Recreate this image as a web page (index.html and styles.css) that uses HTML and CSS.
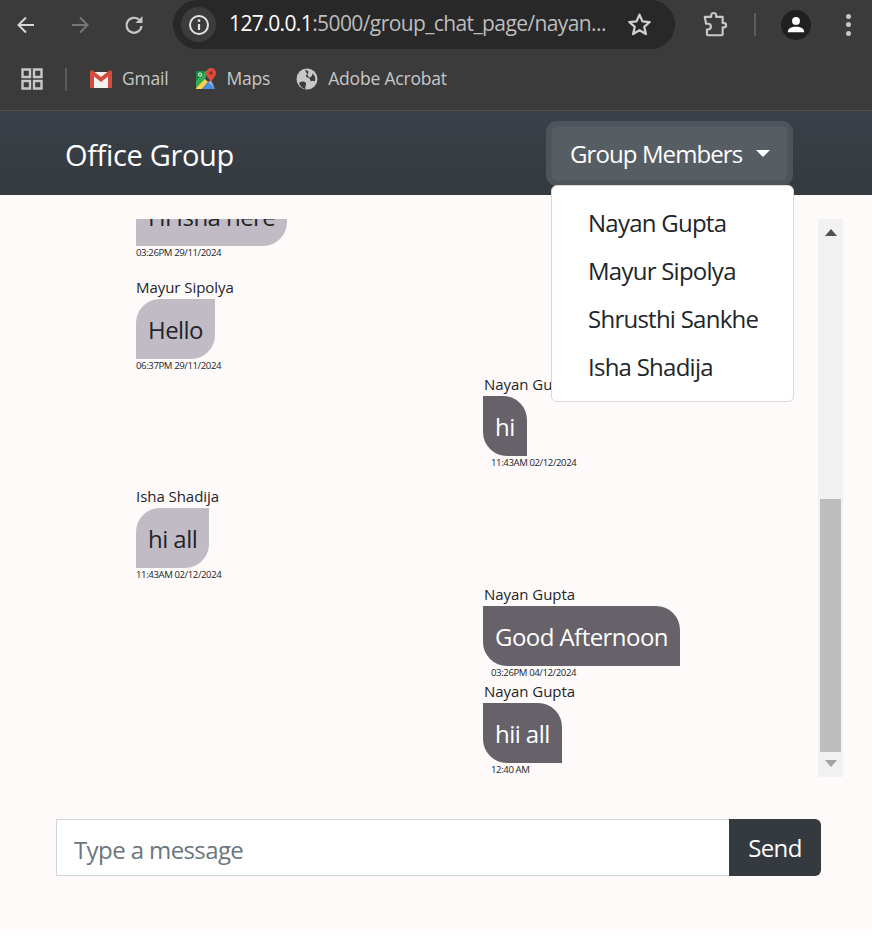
FILE: index.html
```html
<!DOCTYPE html>
<html lang="en">
<head>
    <meta charset="UTF-8">
    <meta name="viewport" content="width=device-width, initial-scale=1.0">
    <title>Office Group</title>
    <link rel="stylesheet" href="styles.css">
</head>
<body>
    <header class="browser">
        <div class="toolbar">
            <svg class="tool tool-back" viewBox="0 0 24 24"><path d="M20 12H5M12 4.500 4.500 12l7.500 7.500" fill="none" stroke="currentColor" stroke-width="2"/></svg>
            <svg class="tool tool-forward" viewBox="0 0 24 24"><path d="M4 12h15M12 4.500l7.500 7.500-7.500 7.500" fill="none" stroke="currentColor" stroke-width="2"/></svg>
            <svg class="tool tool-reload" viewBox="0 0 24 24"><path d="M19.500 13a7.500 7.500 0 1 1-2.300-6.200" fill="none" stroke="currentColor" stroke-width="2.200"/><path d="M20.500 3v7h-7z" fill="currentColor"/></svg>
            <div class="omnibox">
                <span class="site-info">
                    <svg viewBox="0 0 24 24"><circle cx="12" cy="12" r="9" fill="none" stroke="currentColor" stroke-width="2"/><path d="M12 11v6" stroke="currentColor" stroke-width="2.200"/><circle cx="12" cy="7.600" r="1.400" fill="currentColor"/></svg>
                </span>
                <span class="url"><span class="url-host">127.0.0.1</span>:5000/group_chat_page/nayan...</span>
                <svg class="star" viewBox="0 0 24 24"><path d="M12 3.200l2.600 6 6.500.6-4.900 4.300 1.500 6.400L12 17.100l-5.700 3.400 1.500-6.400-4.900-4.300 6.500-.6z" fill="none" stroke="currentColor" stroke-width="2" stroke-linejoin="round"/></svg>
            </div>
            <svg class="puzzle" viewBox="0 0 26 26"><path d="M9.500 5.500V4.200a2.300 2.300 0 0 1 4.600 0v1.300h6v5.700h1.200a2 2 0 0 1 0 4h-1.200v6.300a1 1 0 0 1-1 1H6.500a1 1 0 0 1-1-1v-4.300h1a2.700 2.700 0 0 0 0-5.400h-1.800L3.500 5.500z" fill="none" stroke="currentColor" stroke-width="2" stroke-linejoin="round"/></svg>
            <span class="tool-sep"></span>
            <span class="avatar">
                <svg viewBox="0 0 24 24"><circle cx="12" cy="7.500" r="4.300" fill="#fff"/><path d="M3 20c0-4.200 4-6 9-6s9 1.800 9 6z" fill="#fff"/></svg>
            </span>
            <span class="kebab"><i></i><i></i><i></i></span>
        </div>
        <div class="bookmarks">
            <svg class="apps" viewBox="0 0 22 22"><path d="M1.500 1.500h7.500V9H1.500zM13 1.500h7.500V9H13zM1.500 13H9v7.500H1.500zM13 13h7.500v7.500H13z" fill="none" stroke="currentColor" stroke-width="2.400"/></svg>
            <span class="bm-sep"></span>
            <a class="bookmark bm-gmail">
                <svg viewBox="0 0 22 18"><path d="M1 2h20v15a1 1 0 0 1-1 1H2a1 1 0 0 1-1-1z" fill="#f2f2f2"/><path d="M0 2a1.800 1.800 0 0 1 3-1.200L11 7l8-6.200A1.800 1.800 0 0 1 22 2v15a1 1 0 0 1-1 1h-3V6.500L11 12 4 6.500V18H1a1 1 0 0 1-1-1z" fill="#d54c3f"/></svg>
                Gmail
            </a>
            <a class="bookmark bm-maps">
                <svg viewBox="0 0 22 22"><path d="M1 3h12l-3 9-9 8z" fill="#34a853"/><path d="M1 3h10L1 13z" fill="#1a8a45"/><path d="M1 20 10 11l3 3-6 7H1z" fill="#fbd14b"/><path d="M7 21l6-7 7 7z" fill="#4a90e2"/><path d="M13 14l3-2 4 9z" fill="#8ab4f8"/><path d="M16 0a5 5 0 0 1 5 5c0 3.500-3.500 5.500-5 9.500-1.500-4-5-6-5-9.500a5 5 0 0 1 5-5z" fill="#dd4b3e"/><circle cx="16" cy="5" r="1.800" fill="#8c2a22"/><circle cx="5" cy="6.500" r="1.600" fill="none" stroke="#fff"/></svg>
                Maps
            </a>
            <a class="bookmark bm-acrobat">
                <svg viewBox="0 0 22 22"><circle cx="11" cy="11" r="10.500" fill="#c7c7c7"/><path d="M3 15c2-2 5-2 6.500-.5 1 1 .6 2.500 0 3.500-.4.900-.2 2 .3 3-3-.3-5.500-2.300-6.800-6z" fill="#3b3b3b"/><path d="M9 2c2 0 3.800 1 3.500 2.500-.2 1.500-2 1.500-2.500 3-.4 1.500 1.500 2.500 3.500 2 2-.4 3-2 3-4.200L18.600 8c1 2 .8 4-.1 5.500-1-1-2.300-.7-3.500 0" fill="#3b3b3b"/></svg>
                Adobe Acrobat
            </a>
        </div>
    </header>

    <nav class="navbar">
        <span class="navbar-title">Office Group</span>
        <div class="dropdown">
            <button class="dropdown-toggle" type="button">Group Members<span class="caret"></span></button>
            <ul class="dropdown-menu">
                <li>Nayan Gupta</li>
                <li>Mayur Sipolya</li>
                <li>Shrusthi Sankhe</li>
                <li>Isha Shadija</li>
            </ul>
        </div>
    </nav>

    <main class="chat">
        <div class="chat-window">
            <div class="messages">
                <div class="msg msg-left msg-first">
                    <div class="bubble">Hi Isha here</div>
                    <div class="msg-time">03:26PM 29/11/2024</div>
                </div>
                <div class="msg msg-left">
                    <div class="msg-name">Mayur Sipolya</div>
                    <div class="bubble">Hello</div>
                    <div class="msg-time">06:37PM 29/11/2024</div>
                </div>
                <div class="msg msg-right">
                    <div class="msg-name">Nayan Gupta</div>
                    <div class="bubble">hi</div>
                    <div class="msg-time">11:43AM 02/12/2024</div>
                </div>
                <div class="msg msg-left">
                    <div class="msg-name">Isha Shadija</div>
                    <div class="bubble">hi all</div>
                    <div class="msg-time">11:43AM 02/12/2024</div>
                </div>
                <div class="msg msg-right">
                    <div class="msg-name">Nayan Gupta</div>
                    <div class="bubble">Good Afternoon</div>
                    <div class="msg-time">03:26PM 04/12/2024</div>
                </div>
                <div class="msg msg-right">
                    <div class="msg-name">Nayan Gupta</div>
                    <div class="bubble">hii all</div>
                    <div class="msg-time">12:40 AM</div>
                </div>
            </div>
            <div class="scrollbar">
                <span class="arrow-up"></span>
                <span class="thumb"></span>
                <span class="arrow-down"></span>
            </div>
        </div>
        <form class="composer">
            <input class="composer-input" type="text" placeholder="Type a message">
            <button class="composer-send" type="submit">Send</button>
        </form>
    </main>
</body>
</html>
```

FILE: styles.css
```css
html {
    background-color: #fff;
}
body {
    margin: 0;
    height: 932px;
    overflow: hidden;
    background-color: #fffafa;
    font-family: "Open Sans", "Noto Sans", sans-serif;
    color: #212529;
}

/* browser chrome */
.browser {
    height: 111px;
    background-color: #3b3b3b;
    border-bottom: 1px solid #4e4e4e;
    box-sizing: border-box;
    color: #c7c7c7;
}
.toolbar {
    display: flex;
    align-items: center;
    height: 49px;
    padding-left: 14px;
}
.tool {
    width: 24px;
    height: 24px;
    flex: none;
}
.tool-back {
    color: #d6d6d6;
}
.tool-forward {
    margin-left: 30px;
    color: #777;
}
.tool-reload {
    margin-left: 30px;
    color: #c7c7c7;
}
.omnibox {
    display: flex;
    align-items: center;
    width: 502px;
    height: 49px;
    margin-left: 27px;
    padding-left: 8px;
    box-sizing: border-box;
    background-color: #282828;
    border-radius: 25px;
}
.site-info {
    display: flex;
    align-items: center;
    justify-content: center;
    width: 35px;
    height: 35px;
    border-radius: 50%;
    background-color: #3c3c3c;
    color: #e3e3e3;
}
.site-info svg {
    width: 24px;
    height: 24px;
}
.url {
    width: 397px;
    margin-left: 13px;
    padding-bottom: 3px;
    font-size: 21px;
    letter-spacing: -0.6px;
    white-space: nowrap;
    color: #bdbdbd;
}
.url-host {
    color: #fff;
}
.star {
    width: 27px;
    height: 27px;
    color: #d0d0d0;
}
.puzzle {
    width: 28px;
    height: 28px;
    margin-left: 26px;
    color: #c7c7c7;
}
.tool-sep {
    width: 2px;
    height: 23px;
    margin-left: 25px;
    background-color: #5c5c5c;
}
.avatar {
    display: flex;
    align-items: center;
    justify-content: center;
    width: 30px;
    height: 30px;
    margin-left: 25px;
    border-radius: 50%;
    background-color: #202020;
}
.avatar svg {
    width: 22px;
    height: 22px;
}
.kebab {
    display: flex;
    flex-direction: column;
    gap: 3.5px;
    margin-left: 35px;
}
.kebab i {
    width: 5px;
    height: 5px;
    border-radius: 50%;
    background-color: #c7c7c7;
}
.bookmarks {
    display: flex;
    align-items: center;
    height: 60px;
    padding-left: 21px;
    font-size: 17.5px;
    letter-spacing: -0.2px;
}
.apps {
    width: 22px;
    height: 22px;
}
.bm-sep {
    width: 2px;
    height: 23px;
    margin-left: 22px;
    background-color: #5c5c5c;
}
.bookmark {
    display: flex;
    align-items: center;
    gap: 10px;
    padding-bottom: 3px;
}
.bookmark svg {
    width: 22px;
    height: 22px;
    margin-top: 3px;
}
.bm-gmail {
    margin-left: 23px;
}
.bm-maps {
    gap: 9px;
    margin-left: 27px;
}
.bm-acrobat {
    margin-left: 26px;
}

/* navbar */
.navbar {
    display: flex;
    align-items: center;
    justify-content: space-between;
    height: 84px;
    padding: 0 84px 0 65px;
    background-image: linear-gradient(#3a4047, #343a40);
    color: #fff;
}
.navbar-title {
    padding-top: 3px;
    font-size: 29px;
    letter-spacing: -0.35px;
}
.dropdown {
    position: relative;
}
.dropdown-toggle {
    display: flex;
    align-items: center;
    width: 237px;
    height: 55px;
    padding: 0 18px;
    background-color: #565e64;
    border: 1px solid #50575d;
    border-radius: 6px;
    box-shadow: 0 0 0 5px #4d545b;
    font-family: inherit;
    font-size: 24px;
    letter-spacing: -0.9px;
    white-space: nowrap;
    color: #fff;
}
.caret {
    width: 0;
    height: 0;
    margin-left: 14px;
    border-top: 7px solid #fff;
    border-left: 7px solid transparent;
    border-right: 7px solid transparent;
}
.dropdown-menu {
    position: absolute;
    top: 59px;
    left: 0;
    width: 243px;
    margin: 0;
    padding: 13px 0 10px;
    box-sizing: border-box;
    list-style: none;
    background-color: #fff;
    border: 1px solid #d9d9d9;
    border-radius: 6px;
    font-size: 24px;
    letter-spacing: -0.75px;
    color: #212529;
}
.dropdown-menu li {
    height: 48px;
    padding-left: 36px;
    line-height: 48px;
}

/* chat */
.chat {
    padding: 24px 29px 0 56px;
}
.chat-window {
    display: flex;
    height: 558px;
}
.messages {
    flex: 1;
    min-width: 0;
    padding-left: 80px;
    overflow: hidden;
}
.msg {
    margin-bottom: 3px;
}
.msg-left {
    padding-top: 15px;
    margin-bottom: 3.5px;
}
.msg-first {
    margin-top: -48px;
}
.msg-right {
    margin-left: 347px;
}
.msg-name {
    height: 22px;
    line-height: 20px;
    font-size: 15px;
    letter-spacing: -0.05px;
}
.msg-right .msg-name {
    padding-left: 1px;
}
.bubble {
    width: fit-content;
    height: 60px;
    padding: 0 12px;
    line-height: 62px;
    font-size: 24px;
    letter-spacing: -0.55px;
}
.msg-left .bubble {
    background-color: #c1bbc5;
    border-radius: 24px 0 24px 0;
}
.msg-right .bubble {
    background-color: #676169;
    border-radius: 0 24px 0 24px;
    color: #fff;
}
.msg-time {
    height: 12px;
    line-height: 14px;
    font-size: 9.6px;
    letter-spacing: -0.4px;
}
.msg-right .msg-time {
    padding-left: 8px;
}
.scrollbar {
    display: flex;
    flex-direction: column;
    align-items: center;
    justify-content: flex-end;
    position: relative;
    width: 25px;
    background-color: #f1f1f1;
}
.arrow-up {
    position: absolute;
    top: 10px;
    width: 0;
    height: 0;
    border-bottom: 7px solid #505050;
    border-left: 6px solid transparent;
    border-right: 6px solid transparent;
}
.thumb {
    width: 21px;
    height: 253px;
    margin-bottom: 25px;
    background-color: #bebebe;
}
.arrow-down {
    position: absolute;
    bottom: 10px;
    width: 0;
    height: 0;
    border-top: 7px solid #a3a3a3;
    border-left: 6px solid transparent;
    border-right: 6px solid transparent;
}
.composer {
    display: flex;
    width: 765px;
    height: 57px;
    margin-top: 42px;
}
.composer-input {
    flex: 1;
    min-width: 0;
    padding: 3px 17px 0;
    background-color: #fff;
    border: 1px solid #ced4da;
    border-right: none;
    border-radius: 0;
    font-family: inherit;
    font-size: 24px;
    letter-spacing: -0.6px;
    color: #212529;
}
.composer-input::placeholder {
    color: #6c757d;
    opacity: 1;
}
.composer-send {
    width: 92px;
    padding-top: 1px;
    background-color: #343a40;
    border: none;
    border-radius: 0 6px 6px 0;
    font-family: inherit;
    font-size: 24px;
    letter-spacing: -0.6px;
    color: #fff;
}
```
